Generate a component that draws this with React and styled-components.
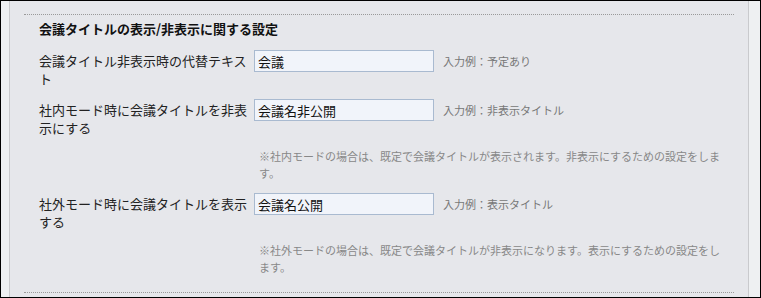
import React from 'react';
import styled, { createGlobalStyle } from 'styled-components';

const GlobalStyle = createGlobalStyle`
  body {
    margin: 0;
    font-family: "Noto Sans CJK JP", "Noto Sans", sans-serif;
    color: #222;
  }
`;

const Frame = styled.div`
  box-sizing: border-box;
  width: 761px;
  height: 298px;
  border: 1px solid #000;
  background: #eef0f2;
  padding: 0 11px 0 8px;
  display: flex;
  overflow: hidden;
`;

const Panel = styled.div`
  flex: 1;
  background: #e6e7eb;
  border-left: 1px solid #c9cacd;
  border-right: 1px solid #c9cacd;
  padding: 13px 14px 0 14px;
`;

const Section = styled.div`
  border-top: 1px dotted #9a9a9a;
  border-bottom: 1px dotted #9a9a9a;
  padding: 5px 0 16px 15px;
`;

const Heading = styled.div`
  font-size: 13px;
  font-weight: bold;
  line-height: 18px;
  color: #111;
  margin-bottom: 12px;
`;

const Row = styled.div`
  display: flex;
  align-items: flex-start;
  margin-top: ${p => p.$top || 0}px;
`;

const Label = styled.div`
  width: 215px;
  font-size: 13px;
  line-height: 18px;
  padding-top: 2px;
  color: #222;
`;

const TextInput = styled.input`
  box-sizing: border-box;
  width: 180px;
  height: 22px;
  border: 1px solid #a9bad0;
  background: #f1f4fa;
  padding: 0 3px;
  font-family: inherit;
  font-size: 13px;
  color: #111;
  outline: none;
`;

const Hint = styled.span`
  margin-left: 9px;
  font-size: 11px;
  line-height: 22px;
  color: #777;
`;

const Note = styled.div`
  margin: 11px 0 0 220px;
  width: 468px;
  font-size: 11px;
  line-height: 17px;
  color: #888;
`;

const settings = [
  {
    label: '会議タイトル非表示時の代替テキスト',
    value: '会議',
    hint: '入力例：予定あり',
  },
  {
    label: '社内モード時に会議タイトルを非表示にする',
    value: '会議名非公開',
    hint: '入力例：非表示タイトル',
    note: '※社内モードの場合は、既定で会議タイトルが表示されます。非表示にするための設定をします。',
  },
  {
    label: '社外モード時に会議タイトルを表示する',
    value: '会議名公開',
    hint: '入力例：表示タイトル',
    note: '※社外モードの場合は、既定で会議タイトルが非表示になります。表示にするための設定をします。',
  },
];

export default function App() {
  return (
    <>
      <GlobalStyle />
      <Frame>
        <Panel>
          <Section>
            <Heading>会議タイトルの表示/非表示に関する設定</Heading>
            {settings.map((item, index) => (
              <React.Fragment key={index}>
                <Row $top={index === 0 ? 0 : 11}>
                  <Label>{item.label}</Label>
                  <TextInput defaultValue={item.value} />
                  <Hint>{item.hint}</Hint>
                </Row>
                {item.note && <Note>{item.note}</Note>}
              </React.Fragment>
            ))}
          </Section>
        </Panel>
      </Frame>
    </>
  );
}
